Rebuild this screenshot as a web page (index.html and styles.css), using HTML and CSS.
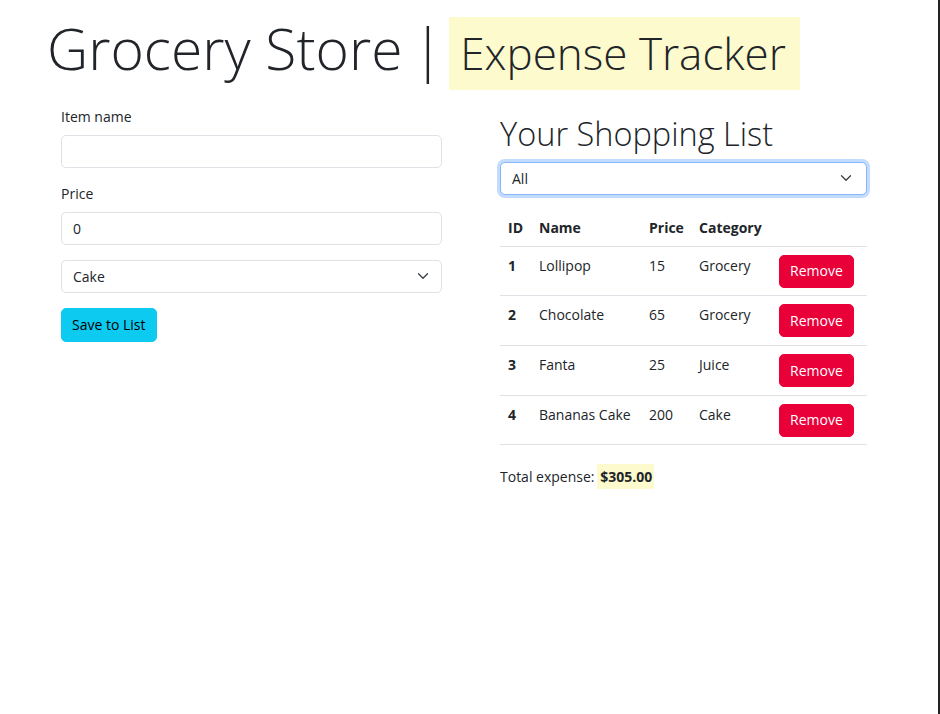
FILE: index.html
```html
<!DOCTYPE html>
<html lang="en">
<head>
<meta charset="utf-8">
<title>Grocery Store | Expense Tracker</title>
<link rel="stylesheet" href="styles.css">
</head>
<body>
<div class="page">
  <h1 class="title"><span class="t-main">Grocery Store</span><span class="bar">|</span><mark class="hl">Expense Tracker</mark></h1>
  <div class="main">
    <form class="entry">
      <label class="lbl" for="name">Item name</label>
      <input class="field" id="name" type="text">
      <label class="lbl" for="price">Price</label>
      <input class="field" id="price" type="number" value="0">
      <div class="select-wrap">
        <select class="field select">
          <option>Cake</option>
          <option>Grocery</option>
          <option>Juice</option>
        </select>
        <svg class="chev" viewBox="0 0 16 16" width="12" height="12"><path d="M2 5l6 6 6-6" fill="none" stroke="#343a40" stroke-width="1.6" stroke-linecap="round" stroke-linejoin="round"/></svg>
      </div>
      <button class="btn btn-save" type="button">Save to List</button>
    </form>
    <section class="list">
      <h2 class="list-title">Your Shopping List</h2>
      <div class="select-wrap">
        <select class="field select focus">
          <option>All</option>
          <option>Grocery</option>
          <option>Juice</option>
          <option>Cake</option>
        </select>
        <svg class="chev chev-r" viewBox="0 0 16 16" width="12" height="12"><path d="M2 5l6 6 6-6" fill="none" stroke="#343a40" stroke-width="1.6" stroke-linecap="round" stroke-linejoin="round"/></svg>
      </div>
      <table class="tbl">
        <colgroup>
          <col class="c-id"><col class="c-name"><col class="c-price"><col class="c-cat"><col class="c-act">
        </colgroup>
        <thead>
          <tr><th>ID</th><th>Name</th><th>Price</th><th>Category</th><th></th></tr>
        </thead>
        <tbody>
          <tr><th>1</th><td>Lollipop</td><td>15</td><td>Grocery</td><td><button class="btn btn-remove" type="button">Remove</button></td></tr>
          <tr><th>2</th><td>Chocolate</td><td>65</td><td>Grocery</td><td><button class="btn btn-remove" type="button">Remove</button></td></tr>
          <tr><th>3</th><td>Fanta</td><td>25</td><td>Juice</td><td><button class="btn btn-remove" type="button">Remove</button></td></tr>
          <tr><th>4</th><td>Bananas Cake</td><td>200</td><td>Cake</td><td><button class="btn btn-remove" type="button">Remove</button></td></tr>
        </tbody>
      </table>
      <p class="total">Total expense:<span class="sp"> </span><mark class="hl-sm">$305.00</mark></p>
    </section>
  </div>
</div>
</body>
</html>
```
FILE: styles.css
```css
html, body {
  margin: 0;
  padding: 0;
  background: #fff;
}
body {
  font-family: "Open Sans", "Noto Sans", sans-serif;
  font-size: 14px;
  line-height: 1.5;
  color: #212529;
}
.page {
  box-sizing: border-box;
  min-height: 100vh;
  border-right: 2px solid #222;
}
.title {
  margin: 0;
  padding: 17px 0 0 47px;
  height: 73px;
  font-size: 57px;
  font-weight: 300;
  line-height: 60px;
  color: #212529;
  white-space: nowrap;
}
.bar {
  margin-left: 10px;
}
.hl {
  display: inline-block;
  vertical-align: baseline;
  box-sizing: border-box;
  height: 73px;
  margin-left: 6px;
  padding: 0 14px 0 11px;
  background: #fdfacd;
  color: #212529;
  font-size: 44px;
  line-height: 73px;
}
.main {
  display: flex;
  gap: 58px;
  padding: 16px 0 0 61px;
}
.entry {
  width: 381px;
  display: flex;
  flex-direction: column;
  align-items: flex-start;
}
.lbl {
  display: block;
  line-height: 21px;
  margin-bottom: 8px;
}
.field {
  box-sizing: border-box;
  width: 100%;
  height: 33px;
  margin: 0 0 15px;
  padding: 0 10px 0 11px;
  font-family: inherit;
  font-size: 14px;
  color: #212529;
  background: #fff;
  border: 1px solid #dee2e6;
  border-radius: 5px;
  outline: none;
  -moz-appearance: textfield;
}
.field::-webkit-outer-spin-button,
.field::-webkit-inner-spin-button {
  -webkit-appearance: none;
  margin: 0;
}
.select-wrap {
  position: relative;
  width: 100%;
}
.select {
  -webkit-appearance: none;
  appearance: none;
  display: block;
}
.chev {
  position: absolute;
  right: 13px;
  top: 10px;
  pointer-events: none;
}
.chev-r {
  right: 15px;
}
.btn {
  box-sizing: border-box;
  height: 34px;
  padding: 0 10px;
  font-family: inherit;
  font-size: 14px;
  line-height: 1;
  border: 1px solid transparent;
  border-radius: 5px;
  cursor: pointer;
}
.btn-save {
  background: #0dcaf0;
  border-color: #0dcaf0;
  color: #000;
}
.list {
  width: 367px;
}
.list-title {
  margin: 10px 0 10px;
  font-size: 32.5px;
  font-weight: 300;
  line-height: 36px;
}
.focus {
  border-color: #86b7fe;
  box-shadow: 0 0 0 3px rgba(13, 110, 253, 0.25);
  margin-bottom: 14px;
}
.tbl {
  width: 367px;
  table-layout: fixed;
  border-collapse: collapse;
}
.c-id { width: 31px; }
.c-name { width: 110px; }
.c-price { width: 50px; }
.c-cat { width: 80px; }
.c-act { width: 96px; }
.tbl th, .tbl td {
  padding: 8px 8px 7.7px;
  text-align: left;
  vertical-align: top;
  line-height: 21px;
  border-bottom: 1px solid #dee2e6;
  white-space: nowrap;
}
.tbl th {
  font-weight: 700;
}
.btn-remove {
  display: block;
  height: 33px;
  background: #ea0039;
  border-color: #ea0039;
  color: #fff;
}
.total {
  margin: 21px 0 0;
  line-height: 21px;
}
.sp {
  letter-spacing: -1px;
}
.hl-sm {
  background: #fdfacd;
  color: #212529;
  font-weight: 700;
  padding: 3px 2px 3px 3px;
}
```
